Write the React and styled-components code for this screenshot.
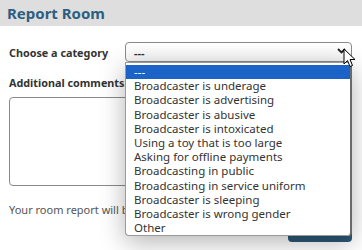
import React from 'react'
import styled, { createGlobalStyle } from 'styled-components'

const Global = createGlobalStyle`
  body {
    margin: 0;
    background: #ffffff;
    font-family: 'Noto Sans', 'Open Sans', sans-serif;
  }
`

const Page = styled.div`
  width: 362px;
  height: 250px;
  position: relative;
  overflow: hidden;
  background: #fff;
`

const Header = styled.div`
  height: 26px;
  background: #dedede;
  padding-left: 7px;
  display: flex;
  align-items: center;
  h1 {
    margin: 0;
    font-size: 15px;
    font-weight: 700;
    color: #2d5f80;
  }
`

const Form = styled.div`
  padding: 16px 10px 0 9px;
  display: flex;
  flex-direction: column;
`

const Row = styled.div`
  display: flex;
  align-items: center;
`

const Label = styled.label`
  font-size: 10.8px;
  font-weight: 700;
  color: #333;
  width: 116px;
  white-space: nowrap;
`

const SelectWrap = styled.div`
  position: relative;
  flex: 1;
`

const SelectBox = styled.div`
  height: 20px;
  border: 1px solid #8a8a8a;
  border-radius: 4px;
  box-sizing: border-box;
  display: flex;
  align-items: center;
  padding-left: 8px;
  font-size: 11px;
  font-weight: 700;
  color: #333;
  background: linear-gradient(#fff, #f6f6f6);
`

const Chevron = styled.svg`
  position: absolute;
  right: 6px;
  top: 6px;
`

const List = styled.ul`
  position: absolute;
  left: 0;
  right: 0;
  top: 20px;
  margin: 0;
  padding: 2px 0 0;
  list-style: none;
  background: #fff;
  border: 1px solid #9a9a9a;
  border-right: 2px solid #6a6a6a;
  border-radius: 0 0 4px 4px;
  box-shadow: 0 6px 26px rgba(0, 0, 0, 0.3);
  z-index: 5;
`

const Item = styled.li`
  height: 14.2px;
  line-height: 14.2px;
  padding-left: 8px;
  font-size: 11.5px;
  color: ${p => (p.$active ? '#fff' : '#333')};
  background: ${p => (p.$active ? '#1b63c6' : 'transparent')};
  white-space: nowrap;
`

const CommentLabel = styled(Label)`
  margin-top: 13px;
`

const TextArea = styled.div`
  margin-top: 7px;
  height: 87px;
  border: 1px solid #8a8a8a;
  border-radius: 4px;
`

const Note = styled.p`
  margin: 16px 0 0;
  font-size: 11px;
  color: #555;
  white-space: nowrap;
`

const Actions = styled.div`
  display: flex;
  justify-content: flex-end;
  margin-top: 3px;
`

const Submit = styled.button`
  width: 64px;
  height: 22px;
  border: none;
  border-radius: 4px;
  background: #2b5876;
  color: #fff;
  font-size: 11px;
`

const Cursor = styled.svg`
  position: absolute;
  left: 343px;
  top: 48px;
  z-index: 10;
`

const options = [
  '---',
  'Broadcaster is underage',
  'Broadcaster is advertising',
  'Broadcaster is abusive',
  'Broadcaster is intoxicated',
  'Using a toy that is too large',
  'Asking for offline payments',
  'Broadcasting in public',
  'Broadcasting in service uniform',
  'Broadcaster is sleeping',
  'Broadcaster is wrong gender',
  'Other',
]

export default function App() {
  return (
    <Page>
      <Global />
      <Header>
        <h1>Report Room</h1>
      </Header>
      <Form>
        <Row>
          <Label>Choose a category</Label>
          <SelectWrap>
            <SelectBox>---</SelectBox>
            <Chevron width="9" height="6" viewBox="0 0 9 6">
              <path d="M1 1 L4.5 4.5 L8 1" stroke="#222" strokeWidth="1.8" fill="none" />
            </Chevron>
            <List>
              {options.map((o, i) => (
                <Item key={o} $active={i === 0}>{o}</Item>
              ))}
            </List>
          </SelectWrap>
        </Row>
        <CommentLabel>Additional comments:</CommentLabel>
        <TextArea />
        <Note>Your room report will be reviewed by our staff.</Note>
        <Actions>
          <Submit>Submit</Submit>
        </Actions>
      </Form>
      <Cursor width="13" height="20" viewBox="0 0 13 20">
        <path d="M1 1 L1 16 L4.5 12.5 L7 18.5 L9.5 17.5 L7 11.5 L12 11.5 Z" fill="#fff" stroke="#000" strokeWidth="1" strokeLinejoin="round" />
      </Cursor>
    </Page>
  )
}
